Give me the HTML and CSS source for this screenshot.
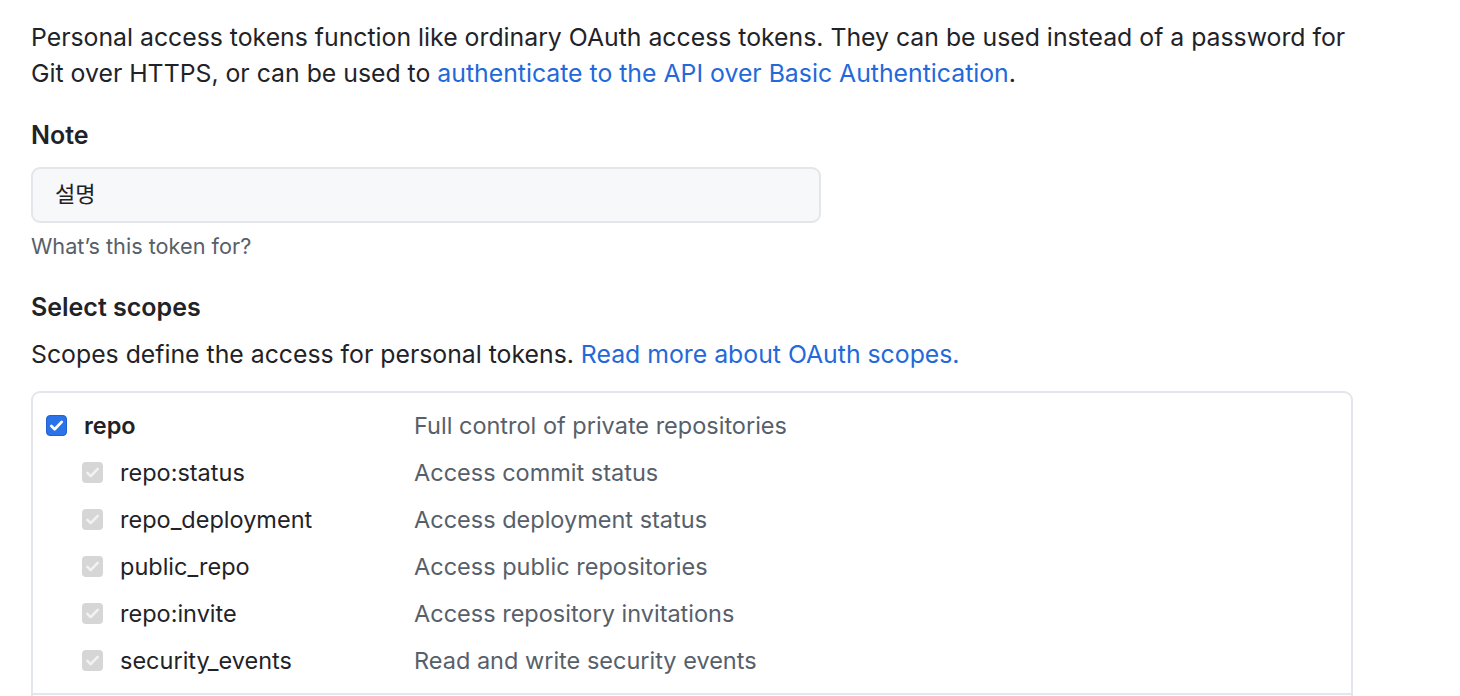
FILE: index.html
```html
<!DOCTYPE html>
<html lang="en">
<head>
<meta charset="utf-8">
<title>New personal access token</title>
<link rel="stylesheet" href="styles.css">
</head>
<body>
<div class="page">
  <p class="intro">Personal access tokens function like ordinary OAuth access tokens. They can be used instead of a password for<br>Git over HTTPS, or can be used to <a href="#">authenticate to the API over Basic Authentication</a>.</p>

  <label class="label" for="note">Note</label>
  <div class="input">설명</div>
  <p class="hint">What’s this token for?</p>

  <h3 class="label scopes-title">Select scopes</h3>
  <p class="scopes-desc">Scopes define the access for personal tokens. <a href="#">Read more about OAuth scopes.</a></p>

  <div class="scopes">
    <div class="group">
      <div class="row">
        <span class="cell name parent"><span class="cb on"><svg viewBox="0 0 16 16" width="17" height="17"><path d="M3.2 8.4l3.1 3.1L12.9 4.6" fill="none" stroke="#fff" stroke-width="2.6" stroke-linecap="round" stroke-linejoin="round"/></svg></span><b>repo</b></span>
        <span class="desc">Full control of private repositories</span>
      </div>
      <div class="row">
        <span class="cell name child"><span class="cb dis"><svg viewBox="0 0 16 16" width="17" height="17"><path d="M3.2 8.4l3.1 3.1L12.9 4.6" fill="none" stroke="#f2f2f2" stroke-width="2.4" stroke-linecap="round" stroke-linejoin="round"/></svg></span>repo:status</span>
        <span class="desc">Access commit status</span>
      </div>
      <div class="row">
        <span class="cell name child"><span class="cb dis"><svg viewBox="0 0 16 16" width="17" height="17"><path d="M3.2 8.4l3.1 3.1L12.9 4.6" fill="none" stroke="#f2f2f2" stroke-width="2.4" stroke-linecap="round" stroke-linejoin="round"/></svg></span>repo_deployment</span>
        <span class="desc">Access deployment status</span>
      </div>
      <div class="row">
        <span class="cell name child"><span class="cb dis"><svg viewBox="0 0 16 16" width="17" height="17"><path d="M3.2 8.4l3.1 3.1L12.9 4.6" fill="none" stroke="#f2f2f2" stroke-width="2.4" stroke-linecap="round" stroke-linejoin="round"/></svg></span>public_repo</span>
        <span class="desc">Access public repositories</span>
      </div>
      <div class="row">
        <span class="cell name child"><span class="cb dis"><svg viewBox="0 0 16 16" width="17" height="17"><path d="M3.2 8.4l3.1 3.1L12.9 4.6" fill="none" stroke="#f2f2f2" stroke-width="2.4" stroke-linecap="round" stroke-linejoin="round"/></svg></span>repo:invite</span>
        <span class="desc">Access repository invitations</span>
      </div>
      <div class="row">
        <span class="cell name child"><span class="cb dis"><svg viewBox="0 0 16 16" width="17" height="17"><path d="M3.2 8.4l3.1 3.1L12.9 4.6" fill="none" stroke="#f2f2f2" stroke-width="2.4" stroke-linecap="round" stroke-linejoin="round"/></svg></span>security_events</span>
        <span class="desc">Read and write security events</span>
      </div>
    </div>
    <div class="group next"></div>
  </div>
</div>
</body>
</html>
```

FILE: styles.css
```css
html, body {
  margin: 0;
  padding: 0;
  background: #ffffff;
}

body {
  font-family: Inter, "Noto Sans", "Noto Sans CJK KR", sans-serif;
  font-size: 24.8px;
  line-height: 36px;
  color: #1f2328;
}

.page {
  padding: 19px 0 0 31px;
  width: 1322px;
}

a {
  color: #2469d9;
  text-decoration: none;
}

.intro {
  margin: 0;
}

.label {
  display: block;
  margin: 26px 0 0 0;
  font-size: 25px;
  line-height: 36px;
  font-weight: 600;
}

.input {
  margin-top: 14px;
  width: 790px;
  height: 56px;
  box-sizing: border-box;
  border: 2px solid #e3e6ea;
  border-radius: 9px;
  background: #f6f8fa;
  padding: 0 22px;
  line-height: 46px;
  font-family: "Noto Sans CJK KR", sans-serif;
  font-size: 22px;
}

.hint {
  margin: 9px 0 0 0;
  font-size: 21.7px;
  line-height: 28px;
  color: #57606a;
}

.scopes-title {
  margin-top: 29px;
}

.scopes-desc {
  margin: 11px 0 0 0;
}

.scopes {
  margin-top: 19px;
  width: 1322px;
  box-sizing: border-box;
  border: 2px solid #e3e6ea;
  border-radius: 9px;
  font-size: 23.5px;
}

.group {
  padding: 9px 0 9px 0;
}

.group.next {
  border-top: 2px solid #e3e6ea;
  height: 40px;
  padding: 0;
}

.row {
  display: flex;
  align-items: center;
  height: 47px;
}

.cell {
  display: flex;
  align-items: center;
}

.name.parent {
  padding-left: 13px;
  width: 368px;
}

.name.child {
  padding-left: 49px;
  width: 332px;
}

.name b {
  font-weight: 600;
}

.cb {
  display: inline-flex;
  align-items: center;
  justify-content: center;
  width: 21px;
  height: 21px;
  box-sizing: border-box;
  border-radius: 4px;
  margin-right: 17px;
  flex: none;
}

.cb.on {
  background: #2a73e9;
  border: 1px solid #1f62d0;
}

.cb.dis {
  background: #d6d6d6;
}

.desc {
  color: #57606a;
}
```
